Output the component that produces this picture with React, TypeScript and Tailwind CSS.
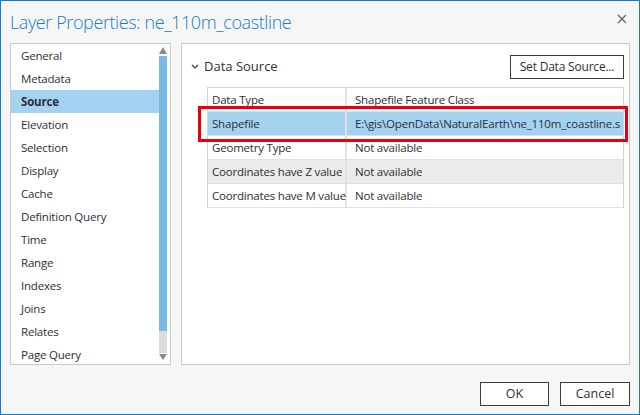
import React from "react";

const pages = [
  "General",
  "Metadata",
  "Source",
  "Elevation",
  "Selection",
  "Display",
  "Cache",
  "Definition Query",
  "Time",
  "Range",
  "Indexes",
  "Joins",
  "Relates",
  "Page Query",
];

const rows = [
  { k: "Data Type", v: "Shapefile Feature Class", bg: "bg-white" },
  { k: "Shapefile", v: "E:\\gis\\OpenData\\NaturalEarth\\ne_110m_coastline.s", bg: "bg-[#a3d3f1]" },
  { k: "Geometry Type", v: "Not available", bg: "bg-white" },
  { k: "Coordinates have Z value", v: "Not available", bg: "bg-[#ebebeb]" },
  { k: "Coordinates have M value", v: "Not available", bg: "bg-white" },
];

export default function App() {
  return (
    <div
      className="flex h-[415px] w-[640px] flex-col border border-[#1a7ac9] bg-[#f5f7f7] text-[#2e2e38]"
      style={{ fontFamily: '"Open Sans", "Noto Sans", sans-serif' }}
    >
      {/* Title bar */}
      <div className="flex h-[42px] shrink-0 items-center justify-between pl-[9px] pr-[12px]">
        <h1 className="text-[18px] font-light tracking-[-0.4px] text-[#2179c9]">Layer Properties: ne_110m_coastline</h1>
        <svg width="10" height="10" viewBox="0 0 10 10" className="mt-[-6px]">
          <path d="M1 1 L9 9 M9 1 L1 9" stroke="#666" strokeWidth="1.4" />
        </svg>
      </div>

      {/* Body */}
      <div className="flex h-[322px] shrink-0 gap-[10px] px-[9px]">
        {/* Page list */}
        <div className="flex w-[161px] shrink-0 border border-[#c9c9c9] bg-white">
          <ul className="min-w-0 flex-1 overflow-hidden">
            {pages.map((p) => (
              <li
                key={p}
                className={`flex h-[23px] shrink-0 items-center pl-[10px] text-[11.5px] tracking-[-0.2px] ${
                  p === "Source" ? "bg-[#a3d3f1] font-bold" : ""
                }`}
              >
                {p}
              </li>
            ))}
          </ul>
          <div className="mr-[3px] flex w-[8px] shrink-0 flex-col items-center">
            <svg width="8" height="12" viewBox="0 0 8 12" className="shrink-0">
              <path d="M0 10 L4 3 L8 10 Z" fill="#8a8a8a" />
            </svg>
            <div className="h-[275px] w-[8px] bg-[#79b9e6]" />
            <div className="h-[22px] w-[8px] bg-[#dcdcdc]" />
            <svg width="8" height="8" viewBox="0 0 8 8" className="shrink-0">
              <path d="M0 1 L8 1 L4 7 Z" fill="#8a8a8a" />
            </svg>
          </div>
        </div>

        {/* Source panel */}
        <div className="relative min-w-0 flex-1 border border-[#c9c9c9] bg-white pl-[25px] pr-[5px] pt-[11px]">
          <div className="flex items-center justify-between">
            <div className="ml-[-5px] flex items-center gap-[2px]">
              <svg width="12" height="8" viewBox="0 0 12 8" className="ml-[-12px]">
                <path d="M2 2 L5 5 L8 2" fill="none" stroke="#555" strokeWidth="1.5" />
              </svg>
              <span className="text-[13px]">Data Source</span>
            </div>
            <button className="h-[24px] w-[114px] border border-[#3c3c3c] bg-white text-[12px] tracking-[-0.2px]">
              Set Data Source...
            </button>
          </div>

          <div className="mt-[8px] overflow-hidden border-x border-t border-[#d4d4d4]">
            {rows.map((r) => (
              <div key={r.k} className={`flex h-[24px] border-b border-[#e0e0e0] text-[11.5px] tracking-[-0.2px] ${r.bg}`}>
                <div className="flex w-[139px] shrink-0 items-center whitespace-nowrap border-r-2 border-[#e2e2e2] pl-[4px]">
                  {r.k}
                </div>
                <div className="flex min-w-0 flex-1 items-center whitespace-nowrap pl-[8px]">
                  {r.v}
                </div>
              </div>
            ))}
          </div>

          {/* Highlight box */}
          <div className="absolute left-[16px] top-[62px] h-[36px] w-[430px] border-[3px] border-[#e8000b]" />
        </div>
      </div>

      {/* Footer */}
      <div className="flex flex-1 items-start justify-end gap-[11px] pr-[9px] pt-[17px]">
        <button className="h-[24px] w-[69px] border border-[#3c3c3c] bg-white text-[12.5px]">OK</button>
        <button className="h-[24px] w-[70px] border border-[#3c3c3c] bg-white text-[12.5px]">Cancel</button>
      </div>
    </div>
  );
}
